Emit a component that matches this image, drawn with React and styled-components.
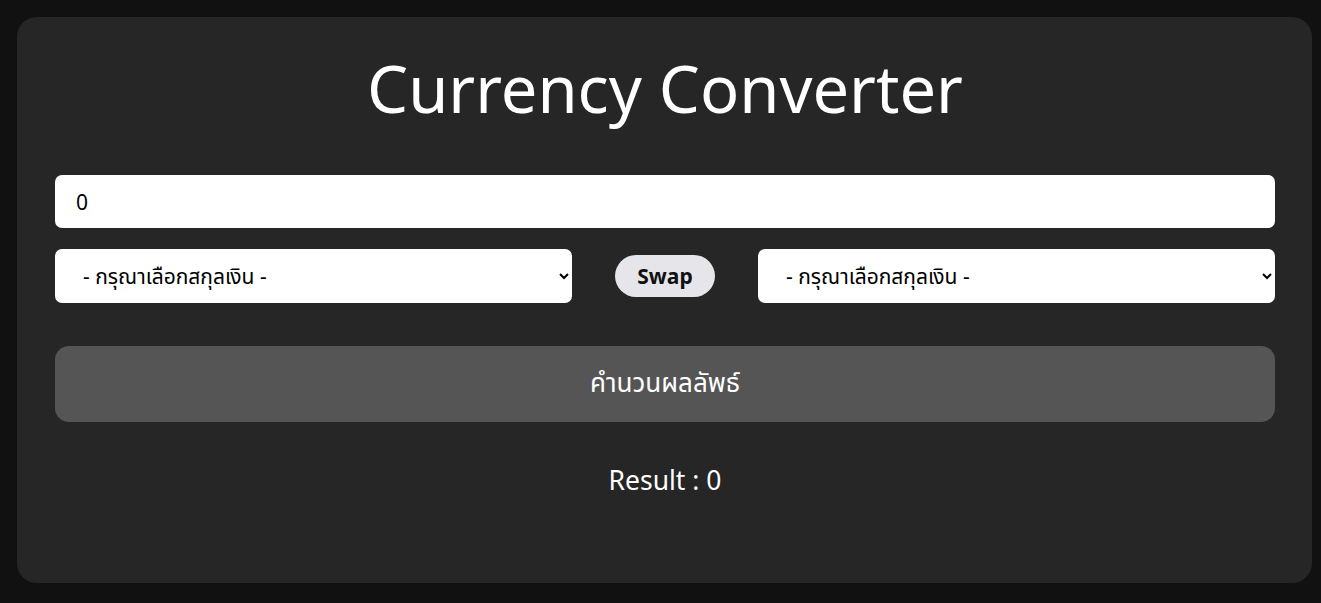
import React, { useState } from "react";
import styled, { createGlobalStyle } from "styled-components";

const GlobalStyle = createGlobalStyle`
  html, body {
    margin: 0;
    padding: 0;
    background: #111111;
    font-family: "Noto Sans", "Noto Sans Thai", "Open Sans", sans-serif;
  }
`;

const Page = styled.div`
  padding: 17px 9px 20px 17px;
`;

const Card = styled.div`
  background: #262626;
  border-radius: 20px;
  height: 566px;
  box-sizing: border-box;
  padding: 32px 37px 0 38px;
  display: flex;
  flex-direction: column;
`;

const Title = styled.h1`
  margin: 0 0 48px;
  text-align: center;
  color: #fff;
  font-size: 65px;
  font-weight: 400;
  line-height: 78px;
`;

const AmountInput = styled.input`
  height: 53px;
  box-sizing: border-box;
  border: none;
  border-radius: 7px;
  padding: 0 21px;
  font-family: inherit;
  font-size: 21px;
  color: #000;
  background: #fff;
  outline: none;
`;

const Row = styled.div`
  display: flex;
  align-items: center;
  gap: 43px;
  margin-top: 21px;
`;

const Select = styled.select`
  flex: 1;
  height: 54px;
  border: none;
  border-radius: 7px;
  padding: 0 14px 0 24px;
  font-family: inherit;
  font-size: 21px;
  color: #000;
  background: #fff;
  outline: none;
`;

const SwapButton = styled.button`
  width: 100px;
  height: 42px;
  border: none;
  border-radius: 21px;
  background: #e6e6ea;
  font-family: inherit;
  font-weight: 700;
  font-size: 21px;
  color: #111;
  cursor: pointer;
`;

const CalcButton = styled.button`
  margin-top: 43px;
  height: 76px;
  border: none;
  border-radius: 14px;
  background: #555555;
  color: #fff;
  font-family: inherit;
  font-size: 26px;
  cursor: pointer;
`;

const Result = styled.p`
  margin: 40px 0 0;
  text-align: center;
  color: #fff;
  font-size: 26.5px;
`;

const App = () => {
  const [amount, setAmount] = useState("0");
  const [from, setFrom] = useState("");
  const [to, setTo] = useState("");

  const swap = () => {
    setFrom(to);
    setTo(from);
  };

  return (
    <Page>
      <GlobalStyle />
      <Card>
        <Title>Currency Converter</Title>
        <AmountInput
          type="number"
          value={amount}
          onChange={(e) => setAmount(e.target.value)}
        />
        <Row>
          <Select value={from} onChange={(e) => setFrom(e.target.value)}>
            <option value="">- กรุณาเลือกสกุลเงิน -</option>
          </Select>
          <SwapButton onClick={swap}>Swap</SwapButton>
          <Select value={to} onChange={(e) => setTo(e.target.value)}>
            <option value="">- กรุณาเลือกสกุลเงิน -</option>
          </Select>
        </Row>
        <CalcButton>คำนวนผลลัพธ์</CalcButton>
        <Result>Result : 0</Result>
      </Card>
    </Page>
  );
};

export default App;
